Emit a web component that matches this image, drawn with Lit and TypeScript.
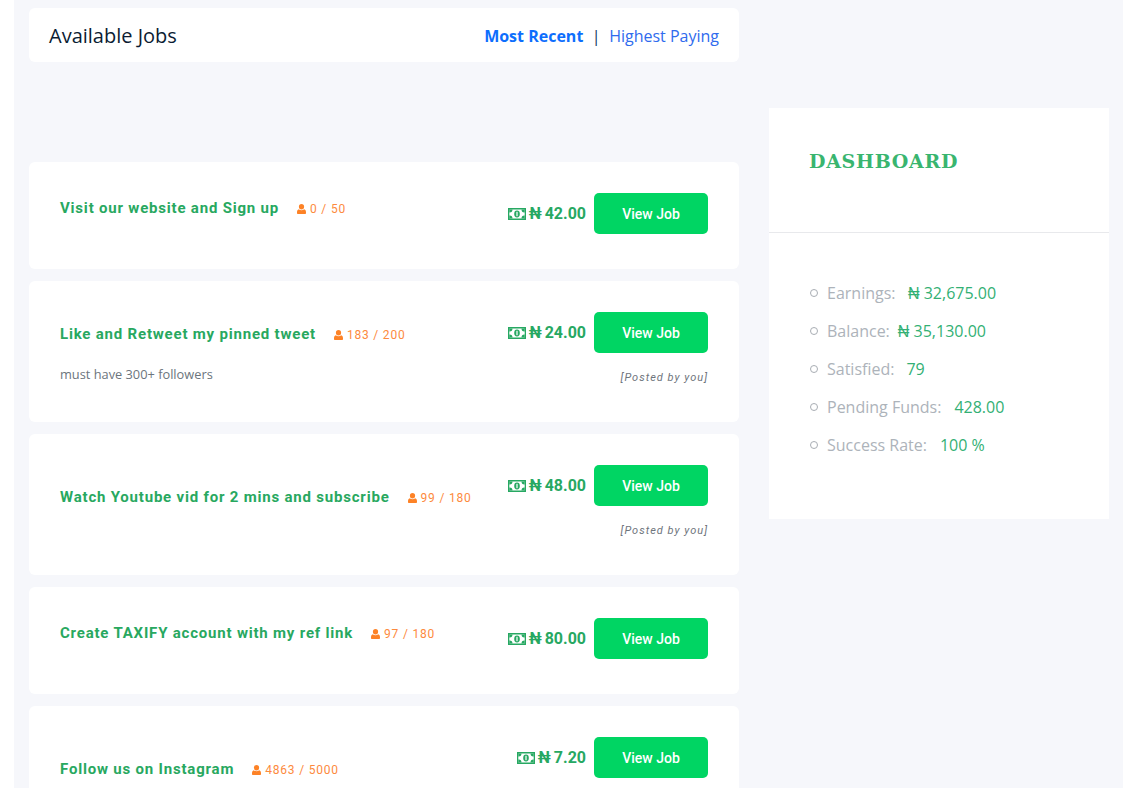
import { LitElement, html, css, svg } from "lit";
import { customElement } from "lit/decorators.js";

interface Job { title: string; count: string; price: string; offset: number; height: number; note?: string; posted?: boolean; }

const jobs: Job[] = [
  { title: "Visit our website and Sign up", count: "0 / 50", price: "42.00", offset: 36, height: 107 },
  { title: "Like and Retweet my pinned tweet", count: "183 / 200", price: "24.00", offset: 43, height: 141, note: "must have 300+ followers", posted: true },
  { title: "Watch Youtube vid for 2 mins and subscribe", count: "99 / 180", price: "48.00", offset: 53, height: 141, posted: true },
  { title: "Create TAXIFY account with my ref link", count: "97 / 180", price: "80.00", offset: 36, height: 107 },
  { title: "Follow us on Instagram", count: "4863 / 5000", price: "7.20", offset: 53, height: 141 },
];

const stats = [
  { label: "Earnings:", value: "₦ 32,675.00", gap: 12.5 },
  { label: "Balance:", value: "₦ 35,130.00", gap: 8 },
  { label: "Satisfied:", value: "79", gap: 12 },
  { label: "Pending Funds:", value: "428.00", gap: 13 },
  { label: "Success Rate:", value: "100 %", gap: 13 },
];

const userIcon = svg`<ellipse cx="4.5" cy="2.7" rx="2.6" ry="2.7"></ellipse><path d="M1.8 5.2C.6 5.6 0 6.8 0 8.2V9c0 .6.4 1 1 1h7c.6 0 1-.4 1-1v-.8c0-1.4-.6-2.6-1.8-3-.7.6-1.7 1-2.7 1s-2-.4-2.7-1z"></path>`;

@customElement("app-root")
export class AppRoot extends LitElement {
  static styles = css`
    :host { display: block; height: 788px; overflow: hidden; background: #fff; font-family: "Open Sans", sans-serif; }
    .page { margin: 0 14px; height: 788px; padding: 8px 14px 0 15px; box-sizing: border-box; background: #f6f7fb; display: flex; gap: 30px; overflow: hidden; }
    .main { width: 710px; flex: none; }
    .head { height: 54px; background: #fff; border-radius: 6px; display: flex; align-items: center; justify-content: space-between; padding: 2px 20px 0; box-sizing: border-box; }
    .head h1 { margin: 0 0 2px; font-size: 20px; font-weight: 400; color: #0b1c33; }
    .sort { font-size: 16px; color: #0b3a80; display: flex; align-items: center; }
    .sort b { color: #0d6efd; font-weight: 700; }
    .sort .sep { margin: 0 8.5px; color: #14325c; }
    .sort a { color: #2f6bee; }
    .list { margin-top: 100px; display: flex; flex-direction: column; gap: 12px; }
    .card { background: #fff; border-radius: 6px; display: flex; justify-content: space-between; padding: 31px 31px 0; box-sizing: border-box; flex: none; }
    .left { min-width: 0; }
    .title { display: flex; align-items: center; white-space: nowrap; }
    .title strong { margin-bottom: 2px; font: 700 15px/20px Roboto, sans-serif; letter-spacing: 0.8px; color: #28a85f; }
    .count { margin-left: 18px; font: 400 12px/20px Roboto, sans-serif; letter-spacing: 0.8px; color: #fd8a3d; display: flex; align-items: center; gap: 4px; }
    .count svg { width: 9px; height: 10px; fill: #fd8226; }
    .note { margin-top: 18px; font-size: 12.8px; line-height: 20px; color: #6c757d; }
    .right { display: flex; flex-direction: column; align-items: flex-end; }
    .buy { display: flex; align-items: center; gap: 8px; }
    .price { display: flex; align-items: center; gap: 3px; font: 700 16px/20px Roboto, "Noto Sans", sans-serif; color: #27a862; white-space: nowrap; }
    .price svg { width: 18px; height: 12px; }
    .naira { margin-right: -1px; }
    .btn { width: 114px; height: 41px; padding-top: 1px; box-sizing: border-box; border-radius: 5px; background: #00d563; color: #fff; font: 500 14px/41px Roboto, sans-serif; text-align: center; }
    .posted { margin-top: 18px; font: italic 400 11px/14px Roboto, sans-serif; letter-spacing: 1px; color: #6f757d; }
    .side { width: 340px; flex: none; height: 411px; margin-top: 100px; background: #fff; }
    .side header { height: 125px; border-bottom: 1px solid #e8e9ec; padding: 38px 40px 0; box-sizing: border-box; }
    .side h2 { margin: 0; font: 700 19px/30px "DejaVu Serif", serif; letter-spacing: 0.7px; color: #39b56f; }
    .side ul { list-style: none; margin: 0; padding: 41px 41px 0; }
    .side li { height: 38px; display: flex; align-items: center; font-size: 16px; white-space: nowrap; }
    .dot { width: 6px; height: 6px; border: 1px solid #a8adb3; border-radius: 50%; margin-right: 9px; flex: none; }
    .lab { color: #adb3ba; }
    .val { color: #33b074; }
  `;

  private money() {
    return html`<svg viewBox="0 0 18 12" aria-hidden="true">
      <rect width="18" height="12" fill="#27a862"></rect>
      <rect x="1.3" y="1.6" width="15.4" height="8.8" rx="0.4" fill="#fff"></rect>
      <path d="M1.3 1.6h3.2a3 3 0 0 1-3.2 3zM16.7 1.6h-3.2a3 3 0 0 0 3.2 3zM1.3 10.4h3.2a3 3 0 0 0-3.2-3zM16.7 10.4h-3.2a3 3 0 0 1 3.2-3z" fill="#27a862"></path>
      <ellipse cx="9" cy="6" rx="2.8" ry="3.4" fill="#27a862"></ellipse>
      <rect x="8.4" y="3.8" width="1.2" height="4.4" fill="#fff"></rect>
    </svg>`;
  }

  render() {
    return html`<div class="page">
      <div class="main">
        <div class="head">
          <h1>Available Jobs</h1>
          <div class="sort"><b>Most Recent</b><span class="sep">|</span><a>Highest Paying</a></div>
        </div>
        <div class="list">
          ${jobs.map((j) => html`<div class="card" style="height:${j.height}px">
            <div class="left" style="padding-top:${j.offset - 31}px">
              <div class="title"><strong>${j.title}</strong><span class="count"><svg viewBox="0 0 9 10">${userIcon}</svg>${j.count}</span></div>
              ${j.note ? html`<div class="note">${j.note}</div>` : ""}
            </div>
            <div class="right">
              <div class="buy">
                <span class="price">${this.money()}<span><span class="naira">₦</span> ${j.price}</span></span>
                <div class="btn">View Job</div>
              </div>
              ${j.posted ? html`<div class="posted">[Posted by you]</div>` : ""}
            </div>
          </div>`)}
        </div>
      </div>
      <aside class="side">
        <header><h2>DASHBOARD</h2></header>
        <ul>
          ${stats.map((s) => html`<li><span class="dot"></span><span class="lab">${s.label}</span><span class="val" style="margin-left:${s.gap}px">${s.value}</span></li>`)}
        </ul>
      </aside>
    </div>`;
  }
}
